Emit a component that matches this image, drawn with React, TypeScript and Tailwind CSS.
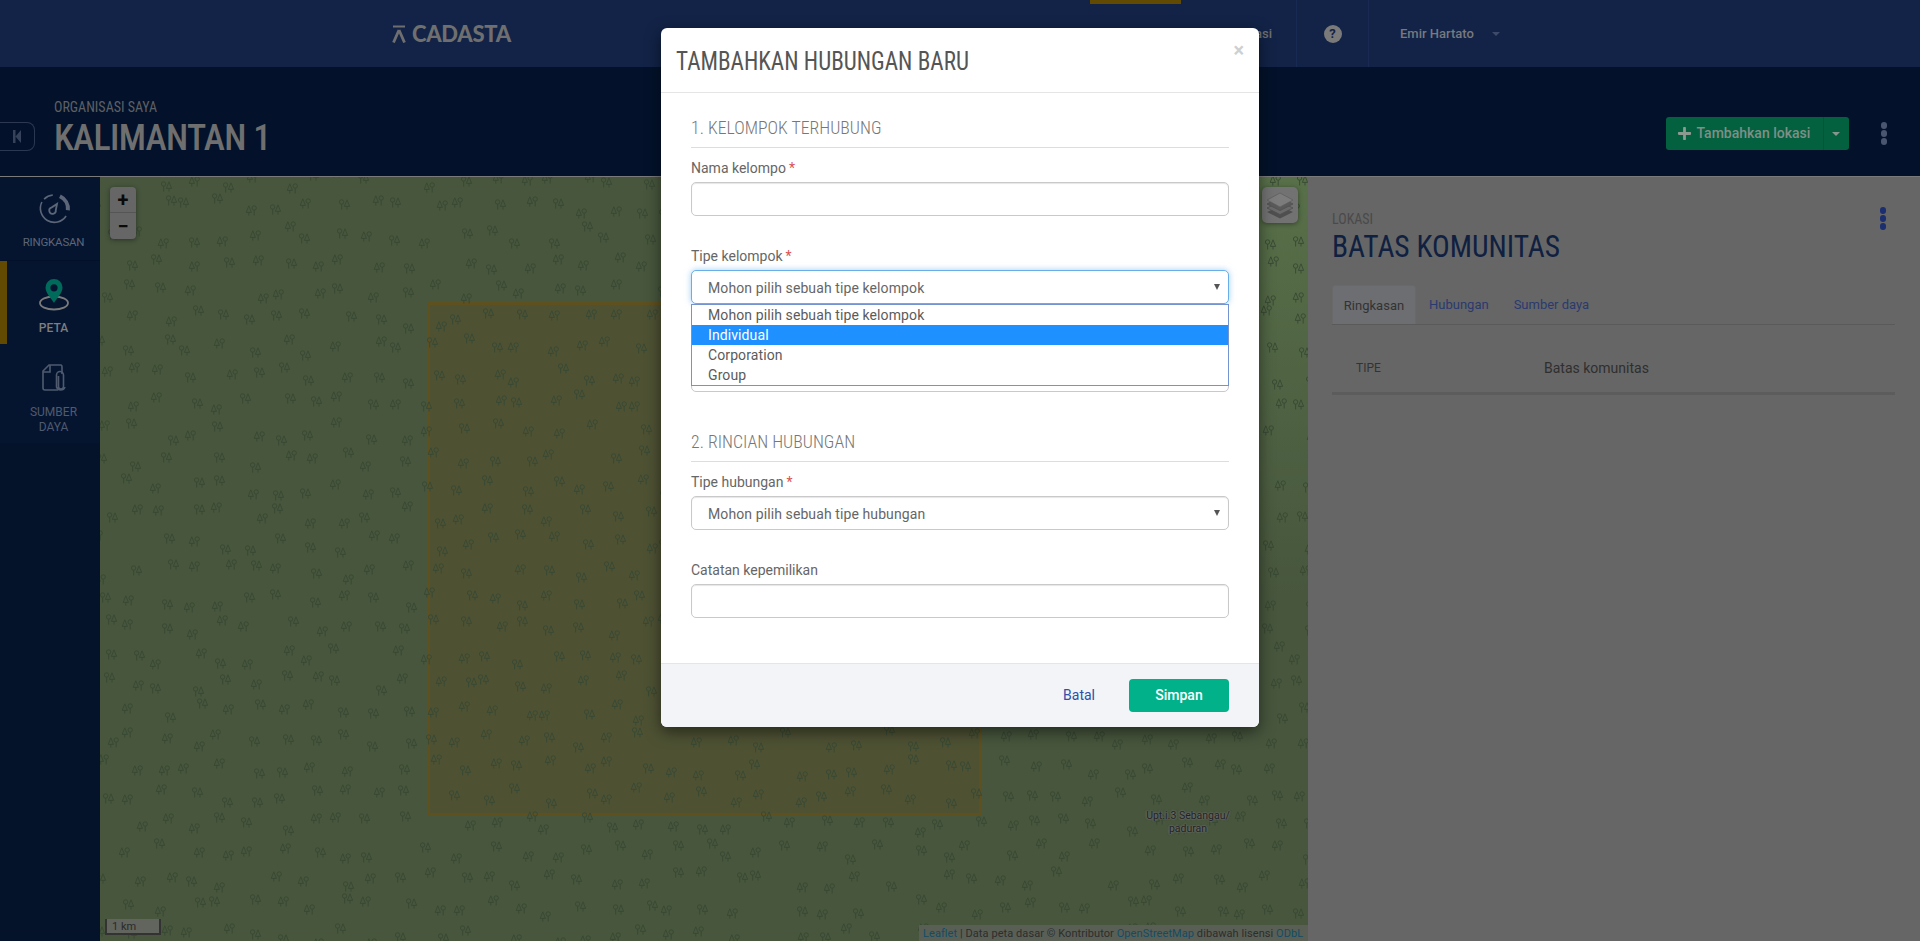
import React from "react";
import { FaPlus } from "react-icons/fa";

function Trees() {
  const items: React.ReactNode[] = [];
  let s = 12345;
  const r = () => {
    s = (s * 1664525 + 1013904223) >>> 0;
    return s / 4294967296;
  };
  for (let y = -8; y < 770; y += 28) {
    for (let x = -8; x < 1215; x += 30) {
      if (r() < 0.03) continue;
      const tx = x + Math.round(r() * 20) - 4;
      const ty = y + Math.round(r() * 18) - 4;
      const flip = r() < 0.5;
      items.push(<use key={`${x}-${y}`} href={flip ? "#tree-a" : "#tree-b"} x={tx} y={ty} />);
    }
  }
  return (
    <svg className="absolute inset-0 h-full w-full" viewBox="0 0 1208 764" preserveAspectRatio="none">
      <defs>
        <g id="tree-a" fill="none" stroke="#384833" strokeWidth="0.9">
          <circle cx="2.6" cy="3" r="2.2" />
          <path d="M2.6 5.2V10.5" />
          <path d="M8 0.8L10.6 7.4H5.4Z" />
          <path d="M8 7.4V10.5" />
        </g>
        <g id="tree-b" fill="none" stroke="#384833" strokeWidth="0.9">
          <path d="M2.8 0.8L5.4 7.4H0.2Z" />
          <path d="M2.8 7.4V10.5" />
          <circle cx="8.2" cy="3" r="2.2" />
          <path d="M8.2 5.2V10.5" />
        </g>
      </defs>
      <rect x="328.5" y="126.5" width="552" height="511" fill="#4e5233" stroke="#5f5020" strokeWidth="3" />
      {items}
    </svg>
  );
}

function Kebab({ color }: { color: string }) {
  return (
    <div className="flex flex-col gap-[1.5px]">
      {[0, 1, 2].map((i) => (
        <span key={i} className="h-[6.5px] w-[6.5px] rounded-full" style={{ background: color }} />
      ))}
    </div>
  );
}

function Label({ text, req }: { text: string; req?: boolean }) {
  return (
    <div className="mb-[4px] flex h-[20px] items-center text-[14px] text-[#666666]">
      {text}
      {req && <span className="ml-[3px] text-[#d9534f]">*</span>}
    </div>
  );
}

function Heading({ text, top }: { text: string; top: string }) {
  return (
    <div className={`${top} flex h-[35px] items-center border-b border-[#dddddd] pb-[6px]`}>
      <span className="origin-left scale-x-[0.935] whitespace-nowrap text-[19px] font-light leading-none text-[#777777] [font-stretch:75%]">{text}</span>
    </div>
  );
}

function Caret() {
  return <span className="absolute right-[8px] top-[13px] h-0 w-0 border-x-[3.5px] border-t-[6px] border-x-transparent border-t-[#555555]" />;
}

export default function App() {
  const field = "h-[34px] w-full rounded-[5px] border border-[#c9c9c9] bg-white shadow-[inset_0_1px_1px_rgba(0,0,0,0.1)]";
  return (
    <div className="relative flex h-[941px] w-full flex-col overflow-hidden bg-[#03122a] font-['Roboto',sans-serif]">
      {/* top nav */}
      <header className="flex h-[67px] shrink-0 bg-[#122347]">
        <div className="ml-[392px] flex w-[120px] items-center gap-[6px]">
          <svg width="14" height="18" viewBox="0 0 14 18" className="shrink-0">
            <path d="M1 1.5H13" stroke="#6f6f6f" strokeWidth="2" />
            <path d="M7 5L1.5 17.5M7 5l5.5 12.5" stroke="#6f6f6f" strokeWidth="2.8" fill="none" />
          </svg>
          <span className="whitespace-nowrap font-['Lato',sans-serif] text-[22px] font-black leading-none tracking-[-0.3px] text-[#6f6f6f]">CADASTA</span>
        </div>
        <div className="ml-[578px] w-[91px] border-t-4 border-[#634a03]" />
        <div className="flex w-[115px] items-center justify-end pr-[24px] text-[13px] font-medium text-[#6f6f6f]">Organisasi</div>
        <div className="flex w-[73px] items-center justify-center border-x border-[#182a52]">
          <span className="flex h-[18px] w-[18px] items-center justify-center rounded-full bg-[#7a7a7a] text-[13px] font-bold text-[#122347]">?</span>
        </div>
        <div className="ml-[31px] flex items-center text-[13px] font-medium text-[#77797f]">
          Emir Hartato
          <span className="ml-[18px] h-0 w-0 border-x-[4px] border-t-[4px] border-x-transparent border-t-[#3d4a68]" />
        </div>
      </header>

      {/* sub header */}
      <div className="flex h-[109px] shrink-0 items-center pr-[33px]">
        <div className="mt-[30px] flex h-[29px] w-[35px] items-center justify-end rounded-r-[8px] border border-l-0 border-[#2c3852] pr-[13px]">
          <svg width="8" height="13" viewBox="0 0 8 13">
            <path d="M0 0H2.5V13H0ZM8 0V13L2.5 6.5Z" fill="#36415a" />
          </svg>
        </div>
        <div className="ml-[19px] mt-[13px] flex flex-col">
          <span className="text-[14px] leading-[16px] text-[#5d6066] [font-stretch:75%]">ORGANISASI SAYA</span>
          <span className="mt-[3px] text-[36px] font-medium leading-[40px] tracking-[-0.7px] text-[#6f6f6f] [font-stretch:75%]">KALIMANTAN 1</span>
        </div>
        <div className="ml-auto mt-[24px] flex h-[33px] w-[183px] rounded-[3px] bg-[#03613f] text-[14px] font-medium text-[#7f8f87]">
          <div className="flex w-[158px] items-center border-r border-[#07523a] pl-[11px]">
            <FaPlus className="mr-[5px] text-[15px] text-[#8c9a92]" />Tambahkan lokasi
          </div>
          <div className="flex flex-1 items-center justify-center">
            <span className="h-0 w-0 border-x-[4px] border-t-[4px] border-x-transparent border-t-[#87968e]" />
          </div>
        </div>
        <div className="ml-[32px] mt-[24px]">
          <Kebab color="#4a5570" />
        </div>
      </div>
      <div className="h-px shrink-0 bg-[#7a7a7a]" />

      {/* content */}
      <div className="flex min-h-0 flex-1">
        <aside className="flex w-[100px] shrink-0 flex-col bg-[#04122a] text-[11px]">
          <div className="flex h-[84px] flex-col items-center border-b border-[#03102a] bg-[#051530] pl-[7px] pt-[15px] text-[#5c6678]">
            <svg width="34" height="34" viewBox="0 0 34 34" fill="none">
              <path d="M29.1 24A14 14 0 0 1 4.9 10" stroke="#5c6678" strokeWidth="1.6" />
              <path d="M7.1 7.1A14 14 0 0 1 15.8 3.05" stroke="#5c6678" strokeWidth="1.6" />
              <path d="M22.9 4.3A14 14 0 0 1 30.9 18.2" stroke="#5c6678" strokeWidth="4" />
              <path d="M20 12L18.8 18A3.3 3.3 0 1 1 14.8 15.3Z" stroke="#5c6678" strokeWidth="1.8" fill="none" />
            </svg>
            <span className="mt-[8px] text-[11.5px] tracking-[-0.2px]">RINGKASAN</span>
          </div>
          <div className="flex h-[83px] flex-col items-center border-l-[7px] border-[#634a03] bg-[#051530] pt-[17px] font-medium text-[#7e7e7e]">
            <svg width="34" height="34" viewBox="0 0 34 34" fill="none">
              <ellipse cx="17" cy="25" rx="14" ry="6.5" stroke="#7a7a7a" strokeWidth="1.8" />
              <path fillRule="evenodd" d="M17 25C14 20 8.5 15 8.5 9.5A8.5 8.5 0 0 1 25.5 9.5C25.5 15 20 20 17 25ZM17 6.2A3.6 3.6 0 1 0 17 13.4A3.6 3.6 0 1 0 17 6.2Z" fill="#006a5b" />
            </svg>
            <span className="mt-[7px] text-[12px]">PETA</span>
          </div>
          <div className="flex h-[99px] flex-col items-center bg-[#051530] pl-[7px] pt-[20px] text-[12px] leading-[15px] text-[#4f5a6e]">
            <svg width="24" height="28" viewBox="0 0 24 28" fill="none" stroke="#4f5a6e" strokeWidth="1.6">
              <path d="M16 26H3A2 2 0 0 1 1 24V7L7 1H19A2 2 0 0 1 20 3V10" />
              <path d="M1 8H8V1" />
              <path d="M16.5 12V22.5A2.5 2.5 0 0 0 21.5 22.5V11A3.5 3.5 0 0 0 14.5 11V23A4.5 4.5 0 0 0 23 23" />
            </svg>
            <span className="mt-[13px]">SUMBER</span>
            <span>DAYA</span>
          </div>
        </aside>

        <main className="relative min-w-0 flex-1 overflow-hidden bg-[#47563d]">
          <div className="absolute right-0 top-0 h-[420px] w-[49px] bg-gradient-to-b from-[#587049] to-[#47563d]" />
          <Trees />
          <div className="absolute left-[10px] top-[10px] flex w-[26px] flex-col overflow-hidden rounded-[4px] bg-[#666666] text-[#0a0a0a] shadow-[0_1px_5px_rgba(0,0,0,0.4)]">
            <div className="flex h-[26px] items-center justify-center border-b border-[#555555] text-[20px] font-bold leading-none">+</div>
            <div className="flex h-[26px] items-center justify-center text-[20px] font-bold leading-none">−</div>
          </div>
          <div className="absolute right-[10px] top-[10px] flex h-[36px] w-[36px] items-center justify-center rounded-[5px] bg-[#727272] shadow-[0_1px_5px_rgba(0,0,0,0.4)]">
            <svg width="28" height="27" viewBox="0 0 28 27">
              <path d="M14 14L27 20L14 26.5L1 20Z" fill="#4f4f4f" />
              <path d="M14 9.5L27 16L14 22.5L1 16Z" fill="#6a6a6a" stroke="#4f4f4f" strokeWidth="0.8" />
              <path d="M14 5.5L27 12L14 18.5L1 12Z" fill="#5a5a5a" stroke="#4f4f4f" strokeWidth="0.8" />
              <path d="M14 1L27 8L14 15L1 8Z" fill="#7c7c7c" stroke="#606060" strokeWidth="0.8" />
            </svg>
          </div>
          <div className="absolute left-[5px] top-[742px] flex h-[16px] w-[56px] items-center border-2 border-t-0 border-[#333333] bg-[#62655e] pl-[5px] text-[11px] leading-none text-[#2a2a2a]">1 km</div>
          <div className="absolute left-[1088px] top-[632px] w-[130px] -translate-x-1/2 text-center text-[10.5px] leading-[13px] text-[#222222] [text-shadow:0_0_2px_#6c6c6c,0_0_2px_#6c6c6c,0_0_2px_#6c6c6c]">
            Upt.i.3 Sebangau/
            <br />
            paduran
          </div>
          <div className="absolute bottom-0 right-0 flex h-[16px] w-[389px] items-center whitespace-nowrap bg-[#5a5f55] pl-[4px] text-[11px] leading-none tracking-[0.07px] text-[#2d2d2d]">
            <span className="text-[#124c66]">Leaflet</span>&nbsp;| Data peta dasar © Kontributor&nbsp;<span className="text-[#124c66]">OpenStreetMap</span>&nbsp;dibawah lisensi&nbsp;<span className="text-[#124c66]">ODbL</span>
          </div>
        </main>

        <section className="w-[612px] shrink-0 bg-[#666666] pl-[24px] pr-[25px] pt-[34px]">
          <div className="flex justify-between">
            <div className="flex flex-col">
              <span className="text-[14px] leading-[16px] text-[#4a4a4a] [font-stretch:75%]">LOKASI</span>
              <span className="mt-[1px] origin-left scale-x-[0.92] whitespace-nowrap text-[32px] leading-[36px] text-[#0f2040] [font-stretch:75%]">BATAS KOMUNITAS</span>
            </div>
            <div className="-mt-[4px] mr-[9px]">
              <Kebab color="#1b2f70" />
            </div>
          </div>
          <div className="mt-[21px] flex h-[40px] items-stretch border-b border-[#5a5a5a] text-[13px]">
            <div className="flex w-[84px] items-center justify-center rounded-t-[3px] border border-b-0 border-[#696969] bg-[#6c6e72] pt-[1px] text-[#333333]">Ringkasan</div>
            <div className="ml-[13px] flex items-center pt-[1px] text-[#2a3a6f]">Hubungan</div>
            <div className="ml-[25px] flex items-center pt-[1px] text-[#2a3a6f]">Sumber daya</div>
          </div>
          <div className="mt-[23px] flex h-[47px] items-start border-b-[3px] border-[#5c5c5c] pl-[24px] pt-[11px]">
            <span className="w-[188px] text-[12px] leading-[18px] text-[#333333]">TIPE</span>
            <span className="text-[14px] leading-[18px] text-[#2f2f2f]">Batas komunitas</span>
          </div>
        </section>
      </div>

      {/* modal */}
      <div className="absolute left-[661px] top-[28px] flex h-[699px] w-[598px] flex-col rounded-[6px] bg-white shadow-[0_5px_15px_rgba(0,0,0,0.5)]">
        <div className="relative flex h-[65px] shrink-0 items-center border-b border-[#e5e5e5] pl-[15px] pt-[2px]">
          <span className="origin-left scale-x-[0.925] whitespace-nowrap text-[25px] leading-none text-[#555555] [font-stretch:75%]">TAMBAHKAN HUBUNGAN BARU</span>
          <span className="absolute right-[15px] top-[12px] text-[20px] font-bold leading-none text-[#cfcfcf]">×</span>
        </div>
        <div className="flex-1 px-[30px] pt-[20px]">
          <Heading text="1. KELOMPOK TERHUBUNG" top="" />
          <div className="mt-[10px]">
            <Label text="Nama kelompo" req />
            <div className={field} />
          </div>
          <div className="relative mt-[30px]">
            <Label text="Tipe kelompok" req />
            <div className="relative flex h-[34px] w-full items-center rounded-[5px] border border-[#66afe9] bg-white pl-[16px] pt-[2px] text-[14px] tracking-[0.1px] text-[#666666] shadow-[0_0_6px_rgba(102,175,233,0.6)]">
              Mohon pilih sebuah tipe kelompok
              <Caret />
            </div>
            <div className="absolute left-0 right-0 top-[58px] z-10 flex flex-col border border-[#7394d0] bg-white text-[14px] leading-[20px] tracking-[0.1px] text-[#5b5b5b]">
              <div className="pl-[16px]">Mohon pilih sebuah tipe kelompok</div>
              <div className="bg-[#1e90ff] pl-[16px] text-white">Individual</div>
              <div className="pl-[16px]">Corporation</div>
              <div className="pl-[16px]">Group</div>
            </div>
          </div>
          <div className="mt-[54px]">
            <div className={field} />
          </div>
          <Heading text="2. RINCIAN HUBUNGAN" top="mt-[35px]" />
          <div className="mt-[10px]">
            <Label text="Tipe hubungan" req />
            <div className={`${field} relative flex items-center pl-[16px] pt-[2px] text-[14px] tracking-[0.1px] text-[#666666]`}>
              Mohon pilih sebuah tipe hubungan
              <Caret />
            </div>
          </div>
          <div className="mt-[30px]">
            <Label text="Catatan kepemilikan" />
            <div className={field} />
          </div>
        </div>
        <div className="flex h-[64px] shrink-0 items-center justify-end rounded-b-[6px] border-t border-[#e2e5ea] bg-[#f2f4f8] pr-[30px] text-[14px]">
          <span className="mr-[34px] text-[#2f4fa8]">Batal</span>
          <span className="flex h-[33px] w-[100px] items-center justify-center rounded-[4px] bg-[#00b189] font-medium text-white">Simpan</span>
        </div>
      </div>
    </div>
  );
}
